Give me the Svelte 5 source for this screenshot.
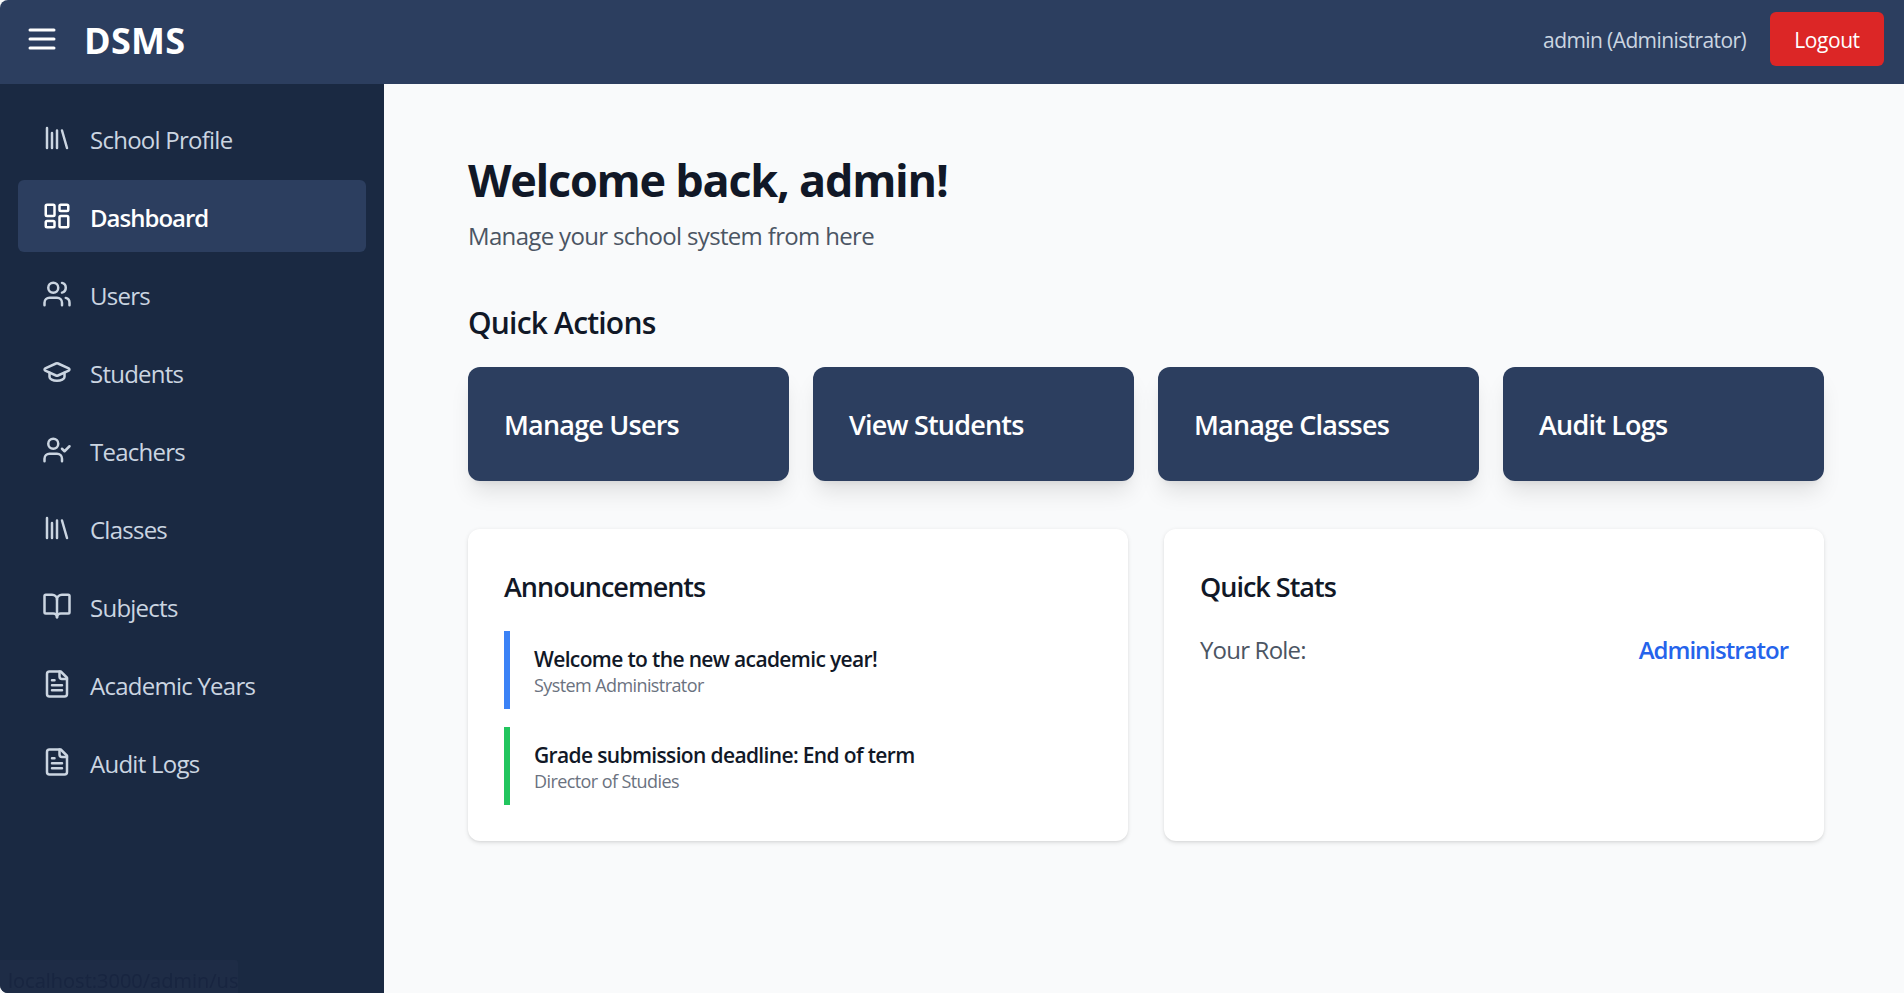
<script>
  const navItems = [
    { label: 'School Profile', icon: 'library' },
    { label: 'Dashboard', icon: 'grid', active: true },
    { label: 'Users', icon: 'users' },
    { label: 'Students', icon: 'cap' },
    { label: 'Teachers', icon: 'usercheck' },
    { label: 'Classes', icon: 'library' },
    { label: 'Subjects', icon: 'book' },
    { label: 'Academic Years', icon: 'file' },
    { label: 'Audit Logs', icon: 'file' }
  ];
  const actions = ['Manage Users', 'View Students', 'Manage Classes', 'Audit Logs'];
  const announcements = [
    { title: 'Welcome to the new academic year!', by: 'System Administrator', color: 'blue' },
    { title: 'Grade submission deadline: End of term', by: 'Director of Studies', color: 'green' }
  ];
</script>

<div class="page">
  <header class="topbar">
    <div class="brand">
      <svg class="menu" viewBox="0 0 24 24" fill="none" stroke="currentColor" stroke-width="2" stroke-linecap="round"><path d="M4 6h16M4 12h16M4 18h16" /></svg>
      <span class="logo">DSMS</span>
    </div>
    <div class="user">
      <span class="who">admin (Administrator)</span>
      <button class="logout">Logout</button>
    </div>
  </header>

  <div class="body">
    <aside class="sidebar">
      <nav>
        {#each navItems as item}
          <a class="nav-item" class:active={item.active} href="#top">
            <svg viewBox="0 0 24 24" fill="none" stroke="currentColor" stroke-width="2" stroke-linecap="round" stroke-linejoin="round">
              {#if item.icon === 'library'}
                <path d="M4 4v16M8 8v12M12 6v14M16 6l4 14" />
              {:else if item.icon === 'grid'}
                <rect x="3" y="3" width="7" height="9" rx="1" /><rect x="14" y="3" width="7" height="5" rx="1" /><rect x="14" y="12" width="7" height="9" rx="1" /><rect x="3" y="16" width="7" height="5" rx="1" />
              {:else if item.icon === 'users'}
                <path d="M16 21v-2a4 4 0 0 0-4-4H6a4 4 0 0 0-4 4v2" /><circle cx="9" cy="7" r="4" /><path d="M22 21v-2a4 4 0 0 0-3-3.870M16 3.130a4 4 0 0 1 0 7.750" />
              {:else if item.icon === 'cap'}
                <path d="M21.400 10.900a1 1 0 0 0 0-1.800L12.800 5.200a2 2 0 0 0-1.600 0L2.600 9.100a1 1 0 0 0 0 1.800l8.600 3.900a2 2 0 0 0 1.600 0z" /><path d="M6 12.500V16a6 3 0 0 0 12 0v-3.500" />
              {:else if item.icon === 'usercheck'}
                <path d="M16 21v-2a4 4 0 0 0-4-4H6a4 4 0 0 0-4 4v2" /><circle cx="9" cy="7" r="4" /><path d="m16 11 2 2 4-4" />
              {:else if item.icon === 'book'}
                <path d="M12 7v14" /><path d="M3 18a1 1 0 0 1-1-1V4a1 1 0 0 1 1-1h5a4 4 0 0 1 4 4 4 4 0 0 1 4-4h5a1 1 0 0 1 1 1v13a1 1 0 0 1-1 1h-6a3 3 0 0 0-3 3 3 3 0 0 0-3-3Z" />
              {:else}
                <path d="M15 2H6a2 2 0 0 0-2 2v16a2 2 0 0 0 2 2h12a2 2 0 0 0 2-2V7Z" /><path d="M14 2v4a2 2 0 0 0 2 2h4M10 9H8M16 13H8M16 17H8" />
              {/if}
            </svg>
            <span>{item.label}</span>
          </a>
        {/each}
      </nav>
      <div class="status"><span>localhost:3000/admin/us</span></div>
    </aside>

    <main class="content">
      <h1>Welcome back, admin!</h1>
      <p class="sub">Manage your school system from here</p>

      <h2 class="section">Quick Actions</h2>
      <div class="actions">
        {#each actions as action}
          <button class="action">{action}</button>
        {/each}
      </div>

      <div class="panels">
        <section class="card">
          <h3>Announcements</h3>
          <div class="notes">
            {#each announcements as note}
              <div class="note {note.color}">
                <div class="note-title">{note.title}</div>
                <div class="note-by">{note.by}</div>
              </div>
            {/each}
          </div>
        </section>
        <section class="card">
          <h3>Quick Stats</h3>
          <div class="stat">
            <span>Your Role:</span>
            <strong>Administrator</strong>
          </div>
        </section>
      </div>
    </main>
  </div>
</div>

<style>
  :global(body) {
    margin: 0;
    background: #f9fafb;
  }

  .page {
    height: 100vh;
    display: flex;
    flex-direction: column;
    overflow: hidden;
    border-radius: 8px 0 0 8px;
    font-family: "Open Sans", "Noto Sans", sans-serif;
    color: #111827;
  }

  .topbar {
    height: 84px;
    flex-shrink: 0;
    box-sizing: border-box;
    background: #2c3e5f;
    color: white;
    display: flex;
    align-items: center;
    justify-content: space-between;
    padding: 0 20px 6px 24px;
  }

  .brand {
    display: flex;
    align-items: center;
    gap: 24px;
  }

  .menu {
    width: 36px;
    height: 36px;
  }

  .logo {
    padding-top: 2px;
    font-size: 36px;
    font-weight: 700;
    letter-spacing: 0.3px;
  }

  .user {
    display: flex;
    align-items: center;
    gap: 24px;
  }

  .who {
    padding-top: 2px;
    font-size: 21px;
    letter-spacing: -0.6px;
    color: #cbd5e1;
  }

  .logout {
    width: 114px;
    height: 54px;
    padding-top: 3px;
    border: none;
    border-radius: 6px;
    background: #dc2626;
    color: white;
    font: inherit;
    font-size: 21px;
    letter-spacing: -0.45px;
  }

  .body {
    flex: 1;
    display: flex;
    min-height: 0;
  }

  .sidebar {
    width: 384px;
    flex-shrink: 0;
    background: #1a2942;
    position: relative;
  }

  nav {
    display: flex;
    flex-direction: column;
    gap: 6px;
    padding: 18px;
  }

  .nav-item {
    height: 72px;
    display: flex;
    align-items: center;
    gap: 18px;
    padding: 0 24px;
    border-radius: 6px;
    color: #cbd5e1;
    text-decoration: none;
    font-size: 24px;
    letter-spacing: -0.75px;
  }

  .nav-item span {
    padding-top: 2px;
  }

  .nav-item svg {
    width: 30px;
    height: 30px;
    flex-shrink: 0;
  }

  .nav-item.active {
    background: #2c3e5f;
    color: white;
    font-weight: 600;
    letter-spacing: -1px;
  }

  .status {
    position: absolute;
    left: 0;
    bottom: 0;
    width: 238px;
    height: 33px;
    padding-left: 8px;
    box-sizing: border-box;
    background: #1e2c46;
    color: #182540;
    font-size: 20px;
    line-height: 42px;
    overflow: hidden;
    white-space: nowrap;
    border-top-right-radius: 3px;
  }

  .status span {
    filter: blur(0.6px);
  }

  .content {
    flex: 1;
    padding: 65px 80px 0 84px;
    min-width: 0;
  }

  h1 {
    margin: 0;
    font-size: 45px;
    font-weight: 700;
    letter-spacing: -1.25px;
    line-height: 62px;
  }

  .sub {
    margin: 8px 0 0;
    font-size: 24px;
    letter-spacing: -0.67px;
    color: #4b5563;
    line-height: 34px;
  }

  .section {
    margin: 50px 0 0;
    font-size: 30px;
    font-weight: 600;
    letter-spacing: -0.8px;
    line-height: 40px;
  }

  .actions {
    margin-top: 24px;
    display: grid;
    grid-template-columns: repeat(4, 1fr);
    gap: 24px;
  }

  .action {
    height: 114px;
    padding: 0 36px;
    border: none;
    border-radius: 12px;
    background: #2c3e5f;
    color: white;
    font: inherit;
    font-size: 27px;
    font-weight: 600;
    letter-spacing: -0.8px;
    text-align: left;
    box-shadow: 0 15px 22px -4px rgba(0, 0, 0, 0.1), 0 6px 9px -6px rgba(0, 0, 0, 0.1);
  }

  .panels {
    margin-top: 48px;
    display: grid;
    grid-template-columns: 1fr 1fr;
    gap: 36px;
  }

  .card {
    height: 312px;
    box-sizing: border-box;
    padding: 36px;
    background: white;
    border-radius: 12px;
    box-shadow: 0 1.5px 4.5px rgba(0, 0, 0, 0.1), 0 1.5px 3px -1.5px rgba(0, 0, 0, 0.1);
  }

  h3 {
    margin: 0;
    font-size: 27px;
    font-weight: 600;
    letter-spacing: -1px;
    line-height: 44px;
  }

  .notes {
    margin-top: 22px;
    display: flex;
    flex-direction: column;
    gap: 18px;
  }

  .note {
    height: 78px;
    box-sizing: border-box;
    padding: 14px 0 0 24px;
    border-left: 6px solid;
  }

  .note.blue {
    border-color: #3b82f6;
  }

  .note.green {
    border-color: #22c55e;
  }

  .note-title {
    font-size: 21px;
    font-weight: 600;
    letter-spacing: -0.65px;
    line-height: 28px;
  }

  .note-by {
    font-size: 18px;
    letter-spacing: -0.59px;
    color: #6b7280;
    line-height: 24px;
  }

  .stat {
    margin-top: 24px;
    display: flex;
    justify-content: space-between;
    align-items: center;
    font-size: 24px;
    letter-spacing: -0.8px;
    color: #4b5563;
  }

  .stat strong {
    font-weight: 600;
    letter-spacing: -1px;
    color: #2563eb;
  }
</style>
